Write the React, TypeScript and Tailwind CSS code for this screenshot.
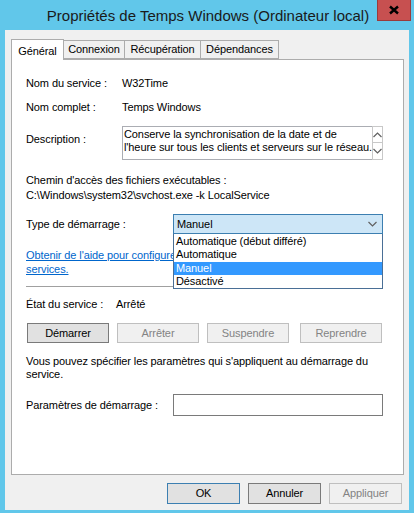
import React from 'react';

const font = { fontFamily: '"Liberation Sans", Arial, sans-serif' };

const Chevron: React.FC<{ up?: boolean; className?: string }> = ({ up, className }) => (
  <svg width="9" height="6" viewBox="0 0 9 6" className={className}>
    <path d={up ? 'M0.5 5 L4.5 1 L8.5 5' : 'M0.5 1 L4.5 5 L8.5 1'} fill="none" stroke="#606060" strokeWidth="1.2" />
  </svg>
);

const Btn: React.FC<{ label: string; disabled?: boolean; def?: boolean }> = ({ label, disabled, def }) => (
  <div
    className={
      'flex items-center justify-center h-[21px] w-[73px] ' +
      (disabled
        ? 'bg-[#f0f0f0] border border-[#bfbfbf] text-[#838383]'
        : def
        ? 'bg-[#e1e1e1] border border-[#3c7fb1] text-black'
        : 'bg-[#e1e1e1] border border-[#7a7a7a] text-black')
    }
  >
    {label}
  </div>
);

export default function App() {
  const tabs = ['Connexion', 'Récupération', 'Dépendances'];
  return (
    <div className="w-[414px] h-[513px] bg-[#61c7ea] flex flex-col text-[11px] tracking-[-0.1px] text-black whitespace-nowrap" style={font}>
      {/* title bar */}
      <div className="relative h-[30px] shrink-0 flex items-center justify-center">
        <span className="text-[15px] tracking-normal text-[#1a1a1a] pl-[2px] pt-[2px]">Propriétés de Temps Windows (Ordinateur local)</span>
        <div className="absolute top-0 right-[3px] w-[34px] h-[21px] bg-[#c75050] border-x border-b border-[#9a3b3b] flex items-center justify-center">
          <svg width="12" height="10" viewBox="0 0 12 10">
            <path d="M2 1.5 L10 8.5 M10 1.5 L2 8.5" stroke="#000" strokeWidth="2.4" />
          </svg>
        </div>
      </div>

      {/* body */}
      <div className="flex-1 mx-[5px] mb-[3px] bg-[#f0f0f0] flex flex-col px-[6px] pt-[8px]">
        {/* tabs */}
        <div className="flex items-end h-[21px] relative z-10">
          <div className="h-[21px] w-[53px] bg-white border-x border-t border-[#acacac] flex items-start justify-center pt-[3px] -mb-px pb-px">
            Général
          </div>
          {tabs.map((t, i) => (
            <div
              key={t}
              className={
                'h-[19px] bg-[#f0f0f0] border-t border-r border-b border-[#acacac] flex items-center justify-center ' +
                (i === 0 ? 'w-[61px]' : i === 1 ? 'w-[76px]' : 'w-[78px]')
              }
            >
              {t}
            </div>
          ))}
        </div>

        {/* panel */}
        <div className="h-[416px] w-[393px] bg-white border border-[#acacac] flex flex-col pl-[14px] pt-[15px]">
          <div className="flex h-[16px] items-center">
            <span className="w-[96px]">Nom du service :</span>
            <span>W32Time</span>
          </div>
          <div className="flex h-[16px] items-center mt-[8px]">
            <span className="w-[96px]">Nom complet :</span>
            <span>Temps Windows</span>
          </div>
          <div className="flex mt-[11px] h-[34px]">
            <span className="w-[96px] pt-[5px] leading-[16px]">Description :</span>
            <div className="w-[260px] h-[34px] border border-[#abadb3] border-r-0 flex">
              <div className="flex-1 leading-[13px] pl-[1px] pt-[1px]">
                Conserve la synchronisation de la date et de
                <br />
                l'heure sur tous les clients et serveurs sur le réseau.
              </div>
              <div className="w-[17px] flex flex-col -mt-px -mb-px">
                <div className="h-[17px] border border-[#c8c8c8] flex items-center justify-center bg-white">
                  <Chevron up />
                </div>
                <div className="h-[17px] border border-t-0 border-[#c8c8c8] flex items-center justify-center bg-white">
                  <Chevron />
                </div>
              </div>
            </div>
          </div>

          <div className="mt-[13px] leading-[15px]">
            Chemin d'accès des fichiers exécutables :
            <br />
            C:\Windows\system32\svchost.exe -k LocalService
          </div>

          <div className="flex items-center mt-[11px] h-[20px]">
            <span className="w-[147px]">Type de démarrage :</span>
            <div className="relative w-[210px] h-[20px]">
              <div className="h-[20px] bg-[#cde6f7] border border-[#3c7fb1] flex items-center pl-[3px] pr-[5px]">
                <span className="flex-1">Manuel</span>
                <Chevron />
              </div>
              <div className="absolute left-0 top-full w-[210px] h-[55px] bg-white border border-t-0 border-[#4a6f96] z-20 flex flex-col pt-[1px] leading-[13px]">
                <div className="h-[13.5px] pl-[2px]">Automatique (début différé)</div>
                <div className="h-[13.5px] pl-[2px]">Automatique</div>
                <div className="h-[13.5px] pl-[2px] bg-[#3399ff] text-white">Manuel</div>
                <div className="h-[13.5px] pl-[2px]">Désactivé</div>
              </div>
            </div>
          </div>

          <div className="mt-[14px] leading-[14px] text-[#0066cc] underline">
            Obtenir de l'aide pour configurer les options de démarrage des
            <br />
            services.
          </div>

          <div className="mt-[10px] h-px w-[357px] bg-[#a0a0a0]" />

          <div className="flex h-[16px] items-center mt-[9px]">
            <span className="w-[90px]">État du service :</span>
            <span>Arrêté</span>
          </div>

          <div className="flex mt-[11px] pl-[1px] h-[20px]">
            <div className="w-[82px] h-[20px] bg-[#e1e1e1] border border-[#7a7a7a] flex items-center justify-center">Démarrer</div>
            <div className="ml-[8px] w-[82px] h-[20px] bg-[#f0f0f0] border border-[#bfbfbf] text-[#838383] flex items-center justify-center">Arrêter</div>
            <div className="ml-[8px] w-[82px] h-[20px] bg-[#f0f0f0] border border-[#bfbfbf] text-[#838383] flex items-center justify-center">Suspendre</div>
            <div className="ml-[11px] w-[82px] h-[20px] bg-[#f0f0f0] border border-[#bfbfbf] text-[#838383] flex items-center justify-center">Reprendre</div>
          </div>

          <div className="mt-[12px] leading-[13px]">
            Vous pouvez spécifier les paramètres qui s'appliquent au démarrage du
            <br />
            service.
          </div>

          <div className="flex items-center mt-[13px] h-[22px]">
            <span className="w-[147px]">Paramètres de démarrage :</span>
            <div className="w-[210px] h-[22px] bg-white border border-[#7a7a7a]" />
          </div>
        </div>

        {/* bottom buttons */}
        <div className="flex justify-end gap-[8px] mt-[8px] pr-[1px]">
          <Btn label="OK" def />
          <Btn label="Annuler" />
          <Btn label="Appliquer" disabled />
        </div>
      </div>
    </div>
  );
}
